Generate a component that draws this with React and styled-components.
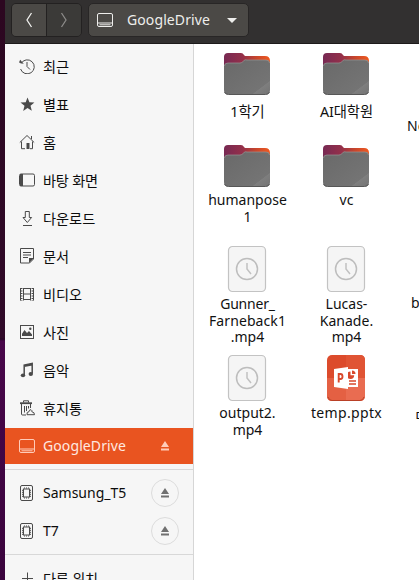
import React from 'react';
import styled, { createGlobalStyle } from 'styled-components';

const Global = createGlobalStyle`
  * { box-sizing: border-box; }
  body { margin: 0; overflow: hidden; font-family: "Noto Sans", "Noto Sans CJK KR", sans-serif; font-size: 14px; color: #111; }
`;
const Desktop = styled.div`
  width: 419px; height: 580px; display: flex; overflow: hidden; padding-left: 5px;
  background: linear-gradient(#2c0720 0, #300a29 338px, #240622 339px, #48074a 341px, #3a043d 580px);
`;
const Window = styled.div`
  flex: 1; min-width: 0; display: flex; flex-direction: column; background: #fff;
`;
const Header = styled.header`
  height: 44px; flex: none; display: flex; gap: 6px; padding: 3px 0 0 6px;
  background: #323030; border-bottom: 1px solid #1d1b1b;
`;
const NavGroup = styled.div`
  width: 71px; height: 34px; display: flex; border: 1px solid #232121; border-radius: 5px; overflow: hidden;
`;
const NavButton = styled.div`
  flex: 1; display: grid; place-items: center; color: ${p => (p.$off ? '#8b8a88' : '#f0f0ee')};
  background: ${p => (p.$off ? '#3b3a38' : '#4b4946')};
  & + & { border-left: 1px solid #232121; }
`;
const PathButton = styled.div`
  width: 161px; height: 34px; display: flex; align-items: center; padding-left: 8px;
  border: 1px solid #282626; border-radius: 5px; background: #4b4946; color: #eeeeec;
`;
const PathName = styled.span`
  width: 100px; margin-left: 14px; line-height: 20px; letter-spacing: ${p => p.$ls}px;
`;
const Body = styled.div`display: flex; flex: 1; min-height: 0;`;
const Sidebar = styled.nav`
  width: 189px; flex: none; overflow: hidden; padding-top: 4px; background: #f6f6f6; border-right: 1px solid #d6d6d6;
`;
const Place = styled.div`
  height: 36px; margin-bottom: 2px; padding: 0 14px; display: flex; align-items: center; gap: 8px;
  background: ${p => (p.$active ? '#e95420' : 'transparent')};
  color: ${p => (p.$active ? '#ffe9e0' : '#0c0c0c')};
  svg { color: ${p => (p.$active ? '#ffcbb8' : '#4a4a4a')}; flex: none; }
`;
const PlaceName = styled.span`
  flex: 1; white-space: nowrap; line-height: 20px; letter-spacing: ${p => p.$ls || 0}px;
`;
const KoreanName = styled(PlaceName)`padding-top: 2px; font-size: 14.2px;`;
const Eject = styled.div`
  width: 28px; height: 28px; display: grid; place-items: center; border-radius: 50%;
  border: 1px solid ${p => (p.$plain ? 'transparent' : '#dcdcdc')};
  && svg { color: ${p => (p.$plain ? '#ffcbb8' : '#707070')}; }
`;
const Rule = styled.div`height: 1px; margin: 5px 0; background: #d8d8d8;`;
const Files = styled.main`
  flex: 1; min-width: 0; overflow: hidden; padding: 0 0 0 3px; display: grid;
  grid-template-columns: repeat(3, 99px); grid-template-rows: 92px 100px 111px 120px; align-content: start;
`;
const Tile = styled.div`
  display: flex; flex-direction: column; align-items: center; padding-top: ${p => p.$top}px;
  svg { flex: none; display: block; }
`;
const Label = styled.div`
  display: flex; flex-direction: column; align-items: center; margin-top: ${p => p.$gap}px; padding-left: 2px;
`;
const Line = styled.span`
  height: 16.5px; line-height: 17px; white-space: nowrap; letter-spacing: ${p => p.$ls || 0}px; font-size: ${p => p.$size || 14}px;
`;
const ClippedTile = styled.div`padding: ${p => p.$top}px 0 0 ${p => p.$left}px; line-height: 17px; white-space: nowrap;`;

const glyphs = {
  recent: <><path d="M2.1 5.5A7 7 0 1 1 1.6 11" /><path d="M8 4v4.5l3 3" /><path d="M0 4.5 4.8 6 1.2 1.8Z" fill="currentColor" stroke="none" /></>,
  star: <path d="m8.5 1.5 1.9 4.8 5 .3-3.9 3.2 1.3 5-4.3-2.8L4.2 15l1.3-5.2-4-3.2 5.2-.3Z" fill="currentColor" stroke="none" />,
  home: <><path d="m.8 8.5 7.2-7 7.2 7M2.5 7.5v7.2H6M13.5 7.5v7.2H11M12.5 2v3" /><path d="M7.5 9h3v6h-3z" fill="currentColor" stroke="none" /></>,
  desk: <><rect x=".5" y="2" width="15" height="12" rx="1.5" /><path d="M1 2h3v12H1z" fill="currentColor" stroke="none" /></>,
  down: <><path d="M6.3 1.5h4v6h2.3l-4.3 5-4.3-5h2.3ZM4 15.5h9" /></>,
  doc: <><path d="M1.5 .5h13v10.500l-4 4h-9ZM4 4.5h8M4 7h8M4 9.5h5" /><path d="M10 15v-5h5Z" fill="currentColor" stroke="none" /></>,
  film: <><path d="M1.5 2v12.5M14.5 2v12.5M4.5 2v12.5M11.5 2v12.5M4.5 2.5h7M4.5 8h7M4.5 13.5h7" /><path d="M2.5 2v13M13.5 2v13" strokeDasharray="1 1.5" strokeWidth="2" /></>,
  photo: <><rect x="1.5" y="1.500" width="13" height="13" /><path d="M3 12V9.8L5.5 6 8 9l2-2 3 3.5V12Z" fill="currentColor" stroke="none" /><circle cx="11.3" cy="4.8" r="1.2" fill="currentColor" stroke="none" /></>,
  music: <><path d="M5.2 13V3l8-1.5v10M5.2 4.2l8-1.5" strokeWidth="1.5" /><g fill="currentColor" stroke="none"><ellipse cx="4" cy="13.3" rx="2.2" ry="1.9" /><ellipse cx="11.8" cy="12" rx="2.2" ry="1.9" /></g></>,
  trash: <><path d="M1 3.2h12" strokeWidth="1.8" /><path d="M4.5 2.5V.8h5v1.7M2.5 4v10q0 1 1 1H7M11.5 4v4M5.5 6v6.5M7.5 6v5M9.5 6v2.5M8 14.7q-.5-3 2-3 0-2 2-2 1.5 1 .8 2 2.8.5 2.7 3Z" /></>,
  drive: <><rect x=".5" y="1.5" width="15" height="13" rx="1.5" /><path d="M1 11h14M2.5 12.8h11" /></>,
  chip: <><rect x="1.5" y=".5" width="12" height="15" rx="1.5" /><rect x="4.5" y="4" width="6" height="8" /><path d="M3.5 4.8v7M11.5 4.8v7M5 3h5.5M5 13h5.5" strokeDasharray="1 1" /></>,
  plus: <path d="M8.5 2.5v11M3 8.500h11" />,
};
const Icon = ({ name }) => (
  <svg width="16" height="16" viewBox="0 0 16 16" fill="none" stroke="currentColor">{glyphs[name]}</svg>
);
const EjectIcon = () => (
  <svg width="8" height="10" viewBox="0 0 8 10" fill="currentColor"><path d="m4 0 4 6H0ZM0 7.5h8v2H0z" /></svg>
);
const Chevron = ({ right }) => (
  <svg width="8" height="16" viewBox="0 0 8 16" fill="none" stroke="currentColor" strokeWidth="1.3">
    <path d={right ? 'M1.5 1 6 8l-4.5 7' : 'M6.5 1 2 8l4.5 7'} />
  </svg>
);
const Folder = ({ id }) => (
  <svg width="48" height="44" viewBox="0 0 48 44">
    <defs>
      <linearGradient id={`back${id}`}><stop stopColor="#772953" /><stop offset=".4" stopColor="#94304a" /><stop offset=".7" stopColor="#c8462c" /><stop offset="1" stopColor="#f05a20" /></linearGradient>
      <linearGradient id={`front${id}`} x2="1" y2="1"><stop stopColor="#696969" /><stop offset=".8" stopColor="#747474" /><stop offset=".81" stopColor="#7e7e7e" /><stop offset="1" stopColor="#747474" /></linearGradient>
    </defs>
    <path d="M1 5q0-4 4-4h13q2 0 3 2l1 1h20q5 0 5 5v9H1Z" fill={`url(#back${id})`} />
    <path d="M1 15q0-4 4-4h12q2 0 3.500-2T24 8h19q4 0 4 4v26q0 4.500-4 4.500H5Q1 42.500 1 38Z" fill={`url(#front${id})`} />
    <path d="M1.500 14q0-3 3.500-3h12q2 0 3.500-2T24 8h19q3.500 0 3.500 3" fill="none" stroke="#969696" strokeWidth=".7" />
    <path d="M1.500 40q1 2.500 4 2.500h37q3 0 4-2.500" fill="none" stroke="#575757" />
  </svg>
);
const Video = () => (
  <svg width="40" height="48" viewBox="0 0 40 48" fill="none">
    <rect x="1.500" y="1.500" width="37" height="45" rx="4" fill="#f5f5f5" stroke="#c3c3c3" strokeWidth="1.200" />
    <circle cx="20" cy="24" r="10.500" stroke="#bdbdbd" strokeWidth="1.500" />
    <path d="M20 18v6l4 5" stroke="#c1c1c1" strokeWidth="1.500" />
  </svg>
);
const Slides = () => (
  <svg width="40" height="48" viewBox="0 0 40 48">
    <rect x="1" y="1" width="38" height="46" rx="5" fill="#dc4b2c" />
    <path d="M20 1h14q5 0 5 5v18H20Z" fill="#e05434" /><path d="M1 24h19v23H6q-5 0-5-5Z" fill="#e46043" /><path d="M20 24h19v18q0 5-5 5H20Z" fill="#e96c51" />
    <path d="M2 43q1 3.500 4 3.500h28q3 0 4-3.500" stroke="#b94026" fill="none" />
    <path d="M22 15h10v18H22Z" fill="#fff" />
    <path d="M24.500 17.500a3.700 3.700 0 1 0 3.700 3.700h-3.700Z" fill="#d9482b" /><path d="M26 16.500v3.500h3.500a3.500 3.500 0 0 0-3.500-3.500Z" fill="#d9482b" />
    <path d="M23 27h7M23 30h7" stroke="#d9482b" strokeWidth="1.500" />
    <path d="m8 15 14-2v22L8 33Z" fill="#fff" />
    <path d="M12.700 28.500V20H14.500a2 2.500 0 0 1 0 5H12.700" fill="none" stroke="#d9482b" strokeWidth="1.900" />
  </svg>
);

const places = [
  ['recent', '최근'], ['star', '별표'], ['home', '홈'], ['desk', '바탕 화면', -0.2], ['down', '다운로드'], ['doc', '문서'],
  ['film', '비디오'], ['photo', '사진'], ['music', '음악'], ['trash', '휴지통'],
];
const File = ({ art, top, gap, lines }) => (
  <Tile $top={top}>{art}<Label $gap={gap}>{lines.map(([text, ls, size]) => <Line key={text} $ls={ls} $size={size}>{text}</Line>)}</Label></Tile>
);

export default function App() {
  return (
    <Desktop>
      <Global />
      <Window>
        <Header>
          <NavGroup><NavButton><Chevron /></NavButton><NavButton $off><Chevron right /></NavButton></NavGroup>
          <PathButton>
            <Icon name="drive" /><PathName $ls={0.1}>GoogleDrive</PathName>
            <svg width="10" height="5" viewBox="0 0 10 5" fill="currentColor"><path d="M0 0h10L5 5Z" /></svg>
          </PathButton>
        </Header>
        <Body>
          <Sidebar>
            {places.map(([icon, name, ls]) => <Place key={name}><Icon name={icon} /><KoreanName $ls={ls}>{name}</KoreanName></Place>)}
            <Place $active><Icon name="drive" /><PlaceName $ls={0.1}>GoogleDrive</PlaceName><Eject $plain><EjectIcon /></Eject></Place>
            <Rule />
            <Place><Icon name="chip" /><PlaceName>Samsung_T5</PlaceName><Eject><EjectIcon /></Eject></Place>
            <Place><Icon name="chip" /><PlaceName>T7</PlaceName><Eject><EjectIcon /></Eject></Place>
            <Rule />
            <Place><Icon name="plus" /><KoreanName $ls={-0.2}>다른 위치</KoreanName></Place>
          </Sidebar>
          <Files>
            <File art={<Folder id="a" />} top={8} gap={7} lines={[['1학기', 0, 14.3]]} />
            <File art={<Folder id="b" />} top={8} gap={7} lines={[['AI대학원', -0.1, 14.3]]} />
            <ClippedTile $top={73} $left={12}>Ne</ClippedTile>
            <File art={<Folder id="c" />} top={8} gap={3} lines={[['humanpose', 0], ['1', 0]]} />
            <File art={<Folder id="d" />} top={8} gap={3} lines={[['vc', 0]]} />
            <div />
            <File art={<Video />} top={9} gap={2} lines={[['Gunner_', -0.2], ['Farneback1', 0.1], ['.mp4', 0]]} />
            <File art={<Video />} top={9} gap={2} lines={[['Lucas-', 0], ['Kanade.', 0], ['mp4', 0]]} />
            <ClippedTile $top={58} $left={16}>b</ClippedTile>
            <File art={<Video />} top={7} gap={2} lines={[['output2.', 0], ['mp4', 0]]} />
            <File art={<Slides />} top={7} gap={2} lines={[['temp.pptx', 0.35]]} />
            <ClippedTile $top={59} $left={19}>ㅁ</ClippedTile>
          </Files>
        </Body>
      </Window>
    </Desktop>
  );
}
